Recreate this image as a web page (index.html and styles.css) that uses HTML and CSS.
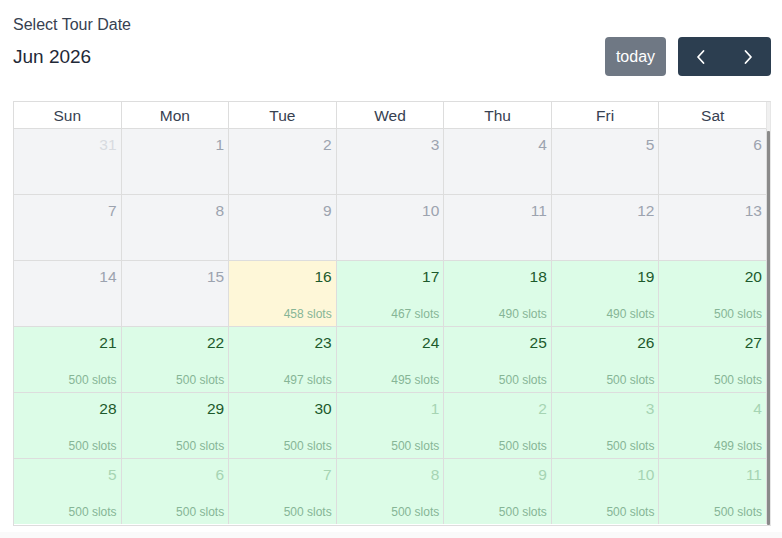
FILE: index.html
```html
<!DOCTYPE html>
<html>
<head>
<meta charset="utf-8">
<link rel="stylesheet" href="styles.css">
</head>
<body>
<div class="page">
  <div class="label">Select Tour Date</div>
  <div class="toolbar">
    <div class="title">Jun 2026</div>
    <div class="actions">
      <button class="btn today">today</button>
      <div class="nav">
        <button class="btn navbtn" aria-label="prev"><svg width="10" height="16" viewBox="0 0 10 16"><path d="M7.5 2 L2 8 L7.5 14" fill="none" stroke="#fff" stroke-width="1.8" stroke-linecap="round" stroke-linejoin="round"/></svg></button>
        <button class="btn navbtn" aria-label="next"><svg width="10" height="16" viewBox="0 0 10 16"><path d="M2.5 2 L8 8 L2.5 14" fill="none" stroke="#fff" stroke-width="1.8" stroke-linecap="round" stroke-linejoin="round"/></svg></button>
      </div>
    </div>
  </div>
  <div class="cal">
    <div class="head">
      <div class="hcell">Sun</div><div class="hcell">Mon</div><div class="hcell">Tue</div><div class="hcell">Wed</div><div class="hcell">Thu</div><div class="hcell">Fri</div><div class="hcell">Sat</div>
      <div class="gutter"></div>
    </div>
    <div class="bodywrap">
      <div class="grid">
        <div class="day past other"><span class="num">31</span></div>
        <div class="day past"><span class="num">1</span></div>
        <div class="day past"><span class="num">2</span></div>
        <div class="day past"><span class="num">3</span></div>
        <div class="day past"><span class="num">4</span></div>
        <div class="day past"><span class="num">5</span></div>
        <div class="day past"><span class="num">6</span></div>

        <div class="day past"><span class="num">7</span></div>
        <div class="day past"><span class="num">8</span></div>
        <div class="day past"><span class="num">9</span></div>
        <div class="day past"><span class="num">10</span></div>
        <div class="day past"><span class="num">11</span></div>
        <div class="day past"><span class="num">12</span></div>
        <div class="day past"><span class="num">13</span></div>

        <div class="day past"><span class="num">14</span></div>
        <div class="day past"><span class="num">15</span></div>
        <div class="day today-cell"><span class="num">16</span><span class="slots">458 slots</span></div>
        <div class="day avail"><span class="num">17</span><span class="slots">467 slots</span></div>
        <div class="day avail"><span class="num">18</span><span class="slots">490 slots</span></div>
        <div class="day avail"><span class="num">19</span><span class="slots">490 slots</span></div>
        <div class="day avail"><span class="num">20</span><span class="slots">500 slots</span></div>

        <div class="day avail"><span class="num">21</span><span class="slots">500 slots</span></div>
        <div class="day avail"><span class="num">22</span><span class="slots">500 slots</span></div>
        <div class="day avail"><span class="num">23</span><span class="slots">497 slots</span></div>
        <div class="day avail"><span class="num">24</span><span class="slots">495 slots</span></div>
        <div class="day avail"><span class="num">25</span><span class="slots">500 slots</span></div>
        <div class="day avail"><span class="num">26</span><span class="slots">500 slots</span></div>
        <div class="day avail"><span class="num">27</span><span class="slots">500 slots</span></div>

        <div class="day avail"><span class="num">28</span><span class="slots">500 slots</span></div>
        <div class="day avail"><span class="num">29</span><span class="slots">500 slots</span></div>
        <div class="day avail"><span class="num">30</span><span class="slots">500 slots</span></div>
        <div class="day avail other"><span class="num">1</span><span class="slots">500 slots</span></div>
        <div class="day avail other"><span class="num">2</span><span class="slots">500 slots</span></div>
        <div class="day avail other"><span class="num">3</span><span class="slots">500 slots</span></div>
        <div class="day avail other"><span class="num">4</span><span class="slots">499 slots</span></div>

        <div class="day avail other"><span class="num">5</span><span class="slots">500 slots</span></div>
        <div class="day avail other"><span class="num">6</span><span class="slots">500 slots</span></div>
        <div class="day avail other"><span class="num">7</span><span class="slots">500 slots</span></div>
        <div class="day avail other"><span class="num">8</span><span class="slots">500 slots</span></div>
        <div class="day avail other"><span class="num">9</span><span class="slots">500 slots</span></div>
        <div class="day avail other"><span class="num">10</span><span class="slots">500 slots</span></div>
        <div class="day avail other"><span class="num">11</span><span class="slots">500 slots</span></div>
      </div>
      <div class="scrollbar"><div class="thumb"></div></div>
    </div>
  </div>
  <div class="footer"></div>
</div>
</body>
</html>
```
FILE: styles.css
```css
html, body {
  margin: 0;
  padding: 0;
  background: #fff;
  font-family: "Liberation Sans", Arial, sans-serif;
}
.page {
  padding: 14px 11px 0 13px;
  display: flex;
  flex-direction: column;
}
.label {
  font-size: 16px;
  line-height: 21px;
  color: #374151;
}
.toolbar {
  margin-top: 2px;
  height: 39px;
  display: flex;
  align-items: center;
  justify-content: space-between;
}
.title {
  font-size: 19px;
  color: #1f2937;
}
.actions {
  display: flex;
  gap: 12px;
  height: 39px;
}
.btn {
  border: none;
  margin: 0;
  font-family: inherit;
  color: #fff;
  cursor: pointer;
}
.today {
  width: 61px;
  height: 39px;
  background: #6f7884;
  border-radius: 4px;
  font-size: 16px;
  padding: 0;
}
.nav {
  display: flex;
  width: 93px;
  height: 39px;
  background: #2c3e50;
  border-radius: 4px;
  overflow: hidden;
}
.navbtn {
  flex: 1;
  background: transparent;
  display: flex;
  align-items: center;
  justify-content: center;
  padding: 0;
}
.cal {
  margin-top: 25px;
  border: 1px solid #dddddd;
  border-right: 1px solid #e6e6e6;
}
.head {
  display: grid;
  grid-template-columns: repeat(7, 1fr) 3px;
  height: 27px;
  border-bottom: 1px solid #dddddd;
  box-sizing: border-box;
}
.hcell {
  border-right: 1px solid #dddddd;
  text-align: center;
  font-size: 15.5px;
  line-height: 27px;
  color: #374151;
}
.hcell:nth-child(7) { border-right: 1px solid #e6e6e6; }
.gutter { background: #f0f0f0; }
.bodywrap {
  display: flex;
}
.grid {
  flex: 1;
  display: grid;
  grid-template-columns: repeat(7, 1fr);
  grid-auto-rows: 66px;
}
.day {
  border-right: 1px solid #dddddd;
  border-bottom: 1px solid #dddddd;
  display: flex;
  flex-direction: column;
  align-items: flex-end;
  justify-content: space-between;
  padding: 7px 4px 4px 0;
  box-sizing: border-box;
}
.grid .day:nth-last-child(-n+7) { border-bottom: none; height: 65px; }
.num {
  font-size: 15.5px;
  line-height: 18px;
}
.slots {
  font-size: 12px;
  line-height: 15px;
  color: #86b596;
}
.past { background: #f3f4f6; }
.past .num { color: #9ca3af; }
.past.other .num { color: #d8dbe0; }
.today-cell { background: #fef7d8; }
.today-cell .num { color: #1d5a2c; }
.avail { background: #dcfce7; }
.avail .num { color: #1d5a2c; }
.avail.other .num { color: #a6d4b3; }
.scrollbar {
  width: 3px;
  background: #f0f0f0;
  padding-top: 2px;
  display: flex;
}
.thumb {
  flex: 1;
  background: #8a8a8a;
  border-radius: 1px;
}
.footer {
  margin: 6px -11px 0 -13px;
  height: 20px;
  background: #fafafa;
}
```
